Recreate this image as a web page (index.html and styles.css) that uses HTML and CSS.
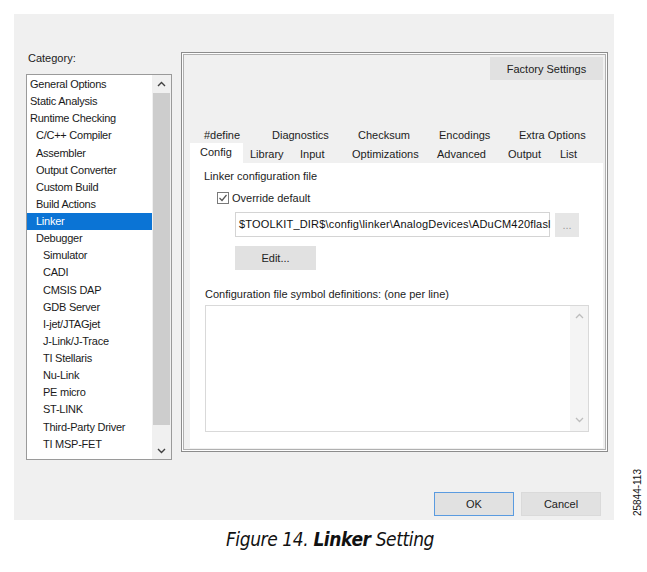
FILE: index.html
```html
<!DOCTYPE html>
<html>
<head>
<meta charset="utf-8">
<link rel="stylesheet" href="styles.css">
</head>
<body>
<div class="figure">
  <div class="top">
    <div class="dialog">
      <div class="main">
        <div class="leftcol">
          <div class="cat-label">Category:</div>
          <div class="listbox">
            <div class="items">
              <div class="item l1">General Options</div>
              <div class="item l1">Static Analysis</div>
              <div class="item l1">Runtime Checking</div>
              <div class="item l2">C/C++ Compiler</div>
              <div class="item l2">Assembler</div>
              <div class="item l2">Output Converter</div>
              <div class="item l2">Custom Build</div>
              <div class="item l2">Build Actions</div>
              <div class="item l2 sel">Linker</div>
              <div class="item l2">Debugger</div>
              <div class="item l3">Simulator</div>
              <div class="item l3">CADI</div>
              <div class="item l3">CMSIS DAP</div>
              <div class="item l3">GDB Server</div>
              <div class="item l3">I-jet/JTAGjet</div>
              <div class="item l3">J-Link/J-Trace</div>
              <div class="item l3">TI Stellaris</div>
              <div class="item l3">Nu-Link</div>
              <div class="item l3">PE micro</div>
              <div class="item l3">ST-LINK</div>
              <div class="item l3">Third-Party Driver</div>
              <div class="item l3">TI MSP-FET</div>
            </div>
            <div class="vscroll">
              <div class="arrow"><svg width="9" height="6" viewBox="0 0 9 6"><polyline points="1,5 4.5,1.5 8,5" fill="none" stroke="#404040" stroke-width="1.4"/></svg></div>
              <div class="thumb"></div>
              <div class="track"></div>
              <div class="arrow"><svg width="9" height="6" viewBox="0 0 9 6"><polyline points="1,1 4.5,4.5 8,1" fill="none" stroke="#404040" stroke-width="1.4"/></svg></div>
            </div>
          </div>
        </div>
        <div class="panel">
          <div class="panel-top">
            <div class="btn factory">Factory Settings</div>
          </div>
          <div class="tabs">
            <div class="tabrow row1">
              <span>#define</span><span>Diagnostics</span><span>Checksum</span><span>Encodings</span><span>Extra Options</span>
            </div>
            <div class="tabrow row2">
              <span class="active">Config</span><span>Library</span><span>Input</span><span>Optimizations</span><span>Advanced</span><span>Output</span><span>List</span>
            </div>
          </div>
          <div class="page">
            <div class="group-label">Linker configuration file</div>
            <div class="check-row">
              <span class="checkbox"><svg width="10" height="10" viewBox="0 0 10 10"><polyline points="1.5,5 4,7.5 8.5,2" fill="none" stroke="#555" stroke-width="1.2"/></svg></span>
              <span>Override default</span>
            </div>
            <div class="path-row">
              <div class="path-input">$TOOLKIT_DIR$\config\linker\AnalogDevices\ADuCM420flasl</div>
              <div class="btn dots">...</div>
            </div>
            <div class="btn edit">Edit...</div>
            <div class="defs-label">Configuration file symbol definitions: (one per line)</div>
            <div class="textarea">
              <div class="ta-body"></div>
              <div class="ta-scroll">
                <svg width="9" height="6" viewBox="0 0 9 6"><polyline points="1,5 4.5,1.5 8,5" fill="none" stroke="#bdbdbd" stroke-width="1.3"/></svg>
                <svg width="9" height="6" viewBox="0 0 9 6"><polyline points="1,1 4.5,4.5 8,1" fill="none" stroke="#bdbdbd" stroke-width="1.3"/></svg>
              </div>
            </div>
          </div>
        </div>
      </div>
      <div class="buttons">
        <div class="btn ok">OK</div>
        <div class="btn cancel">Cancel</div>
      </div>
    </div>
    <div class="side">
      <span class="fignum">25844-113</span>
    </div>
  </div>
  <div class="caption">Figure 14. <b>Linker</b> Setting</div>
</div>
</body>
</html>
```

FILE: styles.css
```css
* { box-sizing: border-box; }
html, body { margin: 0; padding: 0; background: #fff; }
body {
  width: 647px;
  height: 572px;
  overflow: hidden;
  font-family: "Liberation Sans", Arial, sans-serif;
  font-size: 11px;
  color: #1c1c1c;
}
.figure { padding-top: 14px; }
.top { display: flex; align-items: stretch; }
.dialog {
  margin-left: 14px;
  width: 600px;
  height: 506px;
  background: #f0f0f0;
  display: flex;
  flex-direction: column;
  padding: 38px 6px 0 12px;
}
.main { display: flex; gap: 9px; }
.leftcol { width: 146px; }
.cat-label { height: 12px; line-height: 12px; padding-left: 2px; color: #222; }
.listbox {
  margin-top: 10px;
  height: 386px;
  border: 1px solid #9a9a9a;
  background: #fff;
  display: flex;
}
.items { flex: 1; padding-top: 1px; }
.item {
  height: 17.14px;
  line-height: 17px;
  white-space: nowrap;
  letter-spacing: -0.25px;
  color: #1a1a1a;
}
.l1 { padding-left: 3px; }
.l2 { padding-left: 9px; }
.l3 { padding-left: 16px; }
.item.sel { background: #0b74d5; color: #fff; }
.vscroll {
  width: 19px;
  background: #f0f0f0;
  display: flex;
  flex-direction: column;
}
.arrow { height: 17px; display: flex; align-items: center; justify-content: center; }
.thumb { margin: 1px 1px 0 1px; height: 332px; background: #cdcdcd; }
.track { flex: 1; }
.panel {
  width: 427px;
  height: 400px;
  border: 1px solid #8c8c8c;
  box-shadow: inset 0 0 0 1px #fdfdfd, inset 0 0 0 2px #b0b0b0;
  display: flex;
  flex-direction: column;
}
.panel-top { display: flex; justify-content: flex-end; padding: 4px 4px 0 0; }
.btn {
  background: #e1e1e1;
  display: flex;
  align-items: center;
  justify-content: center;
  color: #222;
}
.factory { width: 113px; height: 23px; }
.tabs { margin: 45px 4px 0 8px; }
.tabrow { display: grid; height: 19px; align-items: center; white-space: nowrap; }
.row1 { grid-template-columns: 68px 86px 81px 80px auto; padding-left: 14px; }
.row2 { grid-template-columns: 60px 50px 52px 85px 71px 52px auto; }
.row2 span.active {
  width: 53px;
  height: 20px;
  margin-top: -1px;
  background: #fff;
  padding: 3px 0 0 10px;
}
.page {
  margin: 0 4px 0 8px;
  height: 285px;
  background: #fff;
  padding: 7px 0 0 14px;
}
.group-label { height: 12px; line-height: 12px; }
.check-row { display: flex; align-items: center; margin: 9px 0 0 13px; height: 14px; }
.checkbox {
  width: 12px;
  height: 12px;
  border: 1px solid #7a7a7a;
  margin-right: 3px;
  display: flex;
  align-items: center;
  justify-content: center;
}
.path-row { display: flex; margin: 7px 0 0 31px; gap: 5px; }
.path-input {
  width: 315px;
  height: 25px;
  border: 1px solid #d4d4d4;
  line-height: 23px;
  padding-left: 3px;
  white-space: nowrap;
  letter-spacing: 0.18px;
  color: #111;
}
.dots { width: 24px; height: 24px; margin-top: 1px; background: #e6e6e6; color: #999; }
.edit { width: 81px; height: 24px; margin: 9px 0 0 31px; }
.defs-label { height: 12px; line-height: 12px; margin: 18px 0 0 1px; }
.textarea {
  margin: 5px 0 0 1px;
  width: 384px;
  height: 127px;
  border: 1px solid #d9d9d9;
  display: flex;
}
.ta-body { flex: 1; }
.ta-scroll {
  width: 18px;
  background: #f4f4f4;
  display: flex;
  flex-direction: column;
  justify-content: space-between;
  align-items: center;
  padding: 7px 0 8px;
}
.buttons {
  margin-top: auto;
  padding: 0 7px 4px 0;
  display: flex;
  justify-content: flex-end;
  gap: 7px;
}
.ok, .cancel { width: 80px; height: 24px; }
.ok { border: 1px solid #5a9be0; }
.cancel { border: 1px solid #dadada; }
.side {
  margin-left: 18px;
  display: flex;
  align-items: flex-end;
  padding-bottom: 4px;
}
.fignum {
  writing-mode: vertical-rl;
  transform: rotate(180deg);
  font-size: 10px;
  line-height: 11px;
  color: #111;
}
.caption {
  margin-top: 7px;
  padding-left: 13px;
  text-align: center;
  font-family: "DejaVu Sans Condensed", "DejaVu Sans", sans-serif;
  font-style: italic;
  font-size: 19px;
  line-height: 24px;
  letter-spacing: -0.4px;
  color: #111;
}
.caption b { font-weight: bold; }
```
